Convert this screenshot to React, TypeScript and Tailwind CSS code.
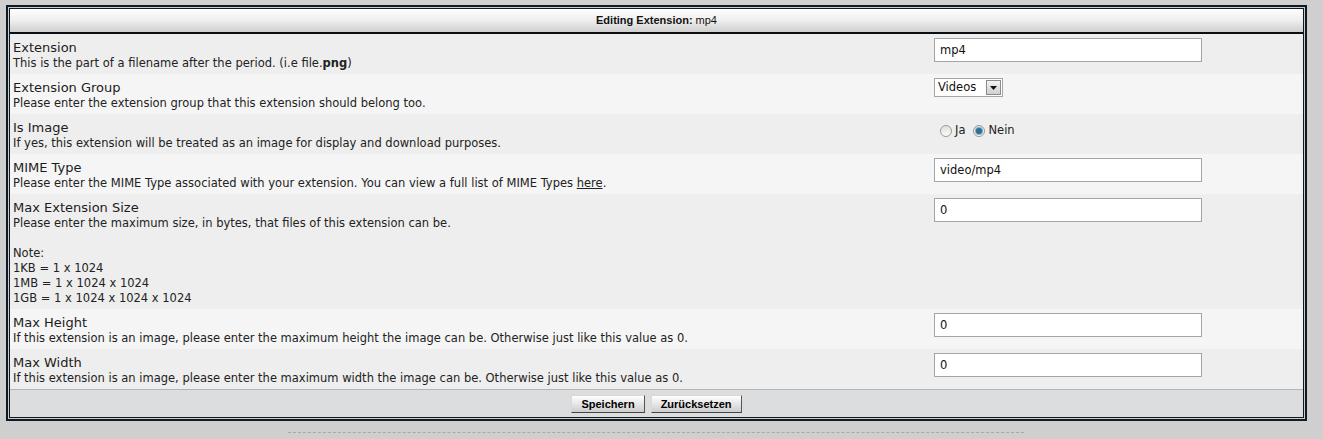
import React from 'react';

const verdana = { fontFamily: '"DejaVu Sans", Verdana, sans-serif' };

type Row = {
  title: string;
  desc: React.ReactNode;
  field: React.ReactNode;
};

const TextInput = ({ value }: { value: string }) => (
  <input
    type="text"
    defaultValue={value}
    className="w-[268px] h-[24px] border border-[#a5a5a5] bg-white px-[5px] text-[11.5px] text-[#111] outline-none"
    style={verdana}
  />
);

const GroupSelect = () => (
  <div className="flex h-[19px] w-[69px] items-stretch border border-[#a5a5a5] bg-white mt-px">
    <span className="flex-1 pl-[3px] text-[11.5px] leading-[17px] text-[#111]">Videos</span>
    <span className="m-px flex w-[15px] items-center justify-center border border-[#8a8a8a] bg-gradient-to-b from-[#f4f4f4] to-[#cfcfcf]">
      <svg width="7" height="4" viewBox="0 0 7 4">
        <path d="M0 0h7L3.5 4z" fill="#111" />
      </svg>
    </span>
  </div>
);

const Radio = ({ checked, label }: { checked?: boolean; label: string }) => (
  <label className="flex items-center gap-[3px] text-[11.5px] text-[#222]">
    <span className="flex h-[12px] w-[12px] items-center justify-center rounded-full border border-[#9a9a9a] bg-gradient-to-b from-[#e0e0e0] to-[#fafafa]">
      {checked && <span className="h-[6px] w-[6px] rounded-full bg-[#2c6f8e] shadow-[0_0_0_1px_#7fb2c9]" />}
    </span>
    {label}
  </label>
);

const rows: Row[] = [
  {
    title: 'Extension',
    desc: (
      <>
        This is the part of a filename after the period. (i.e file.<b>png</b>)
      </>
    ),
    field: <TextInput value="mp4" />,
  },
  {
    title: 'Extension Group',
    desc: 'Please enter the extension group that this extension should belong too.',
    field: <GroupSelect />,
  },
  {
    title: 'Is Image',
    desc: 'If yes, this extension will be treated as an image for display and download purposes.',
    field: (
      <div className="flex items-center gap-[8px] pl-[6px] pt-[5px]">
        <Radio label="Ja" />
        <Radio checked label="Nein" />
      </div>
    ),
  },
  {
    title: 'MIME Type',
    desc: (
      <>
        Please enter the MIME Type associated with your extension. You can view a full list of MIME Types{' '}
        <a href="#" className="underline">
          here
        </a>
        .
      </>
    ),
    field: <TextInput value="video/mp4" />,
  },
  {
    title: 'Max Extension Size',
    desc: (
      <>
        Please enter the maximum size, in bytes, that files of this extension can be.
        <br />
        <br />
        Note:
        <br />
        1KB = 1 x 1024
        <br />
        1MB = 1 x 1024 x 1024
        <br />
        1GB = 1 x 1024 x 1024 x 1024
      </>
    ),
    field: <TextInput value="0" />,
  },
  {
    title: 'Max Height',
    desc: 'If this extension is an image, please enter the maximum height the image can be. Otherwise just like this value as 0.',
    field: <TextInput value="0" />,
  },
  {
    title: 'Max Width',
    desc: 'If this extension is an image, please enter the maximum width the image can be. Otherwise just like this value as 0.',
    field: <TextInput value="0" />,
  },
];

const Button = ({ children }: { children: React.ReactNode }) => (
  <button
    type="button"
    className="h-[18px] border border-t-[#d8d8d8] border-l-[#d8d8d8] border-r-[#555] border-b-[#444] bg-gradient-to-b from-[#ffffff] to-[#cdcdcd] px-[9px] text-[11px] font-bold leading-[16px] text-black"
    style={{ fontFamily: '"Liberation Sans", Tahoma, sans-serif' }}
  >
    {children}
  </button>
);

export default function App() {
  return (
    <div className="min-h-screen bg-[#cfcfcf] pl-[6px] pt-[5px]" style={verdana}>
      <div className="w-[1301px] border-2 border-[#101a22] bg-[#c9ccd0] p-px">
        <div className="border border-[#101a22]">
          <div
            className="flex h-[25px] items-center justify-center border-b-2 border-[#0a0f14] bg-gradient-to-b from-[#ffffff] via-[#eeeeee] to-[#cfcfcf] text-[11px] text-[#111]"
            style={{ fontFamily: '"Liberation Sans", Tahoma, sans-serif' }}
          >
            <b>Editing Extension:</b>
            <span className="ml-[3px]">mp4</span>
          </div>

          {rows.map((row, i) => (
            <div
              key={row.title}
              className={`grid grid-cols-[919px_1fr] ${i % 2 === 0 ? 'bg-[#eeeeee]' : 'bg-[#f5f5f5]'}`}
            >
              <div className="pl-[3px] pt-[6px] pb-[3px]">
                <div className="text-[13px] leading-[16px] text-[#1c1c1c]">{row.title}</div>
                <div className="text-[11.5px] leading-[15px] text-[#222]">{row.desc}</div>
              </div>
              <div className="pl-[5px] pt-[3px]">{row.field}</div>
            </div>
          ))}

          <div className="flex h-[28px] items-center justify-center gap-[6px] border-t border-[#b4b4b4] bg-[#dcdddf]">
            <Button>Speichern</Button>
            <Button>Zurücksetzen</Button>
          </div>
        </div>
      </div>
      <div className="ml-[282px] mt-[11px] w-[736px] border-t border-dashed border-[#a8a8a8]" />
    </div>
  );
}
